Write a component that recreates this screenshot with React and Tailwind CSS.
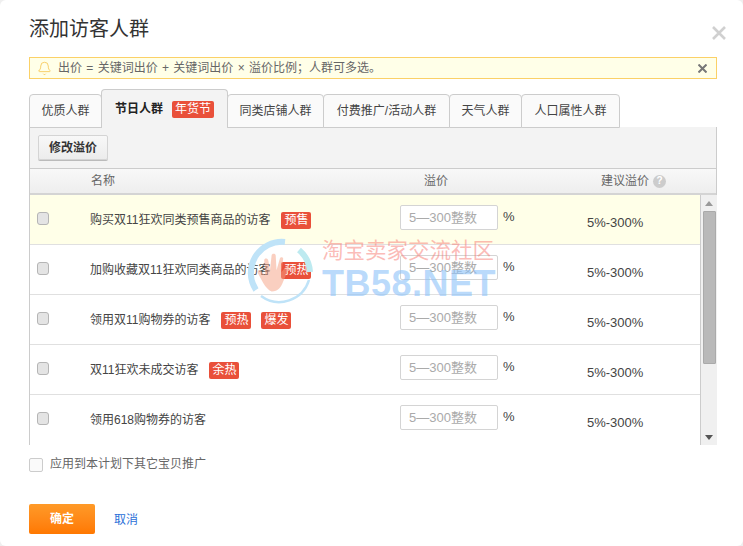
import { Bell } from "lucide-react";

const font = "font-['Liberation_Sans','Noto_Sans_CJK_SC',sans-serif]";

const tabs = [
  { label: "优质人群", width: "w-[73px]" },
  { label: "节日人群", width: "w-[127px]", active: true, badge: "年货节" },
  { label: "同类店铺人群", width: "w-[97px]" },
  { label: "付费推广/活动人群", width: "w-[127px]" },
  { label: "天气人群", width: "w-[73px]" },
  { label: "人口属性人群", width: "w-[99px]" },
];

const rows = [
  { name: "购买双11狂欢同类预售商品的访客", tags: ["预售"], highlight: true },
  { name: "加购收藏双11狂欢同类商品的访客", tags: ["预热"] },
  { name: "领用双11购物券的访客", tags: ["预热", "爆发"] },
  { name: "双11狂欢未成交访客", tags: ["余热"] },
  { name: "领用618购物券的访客", tags: [] },
];

const Tag = ({ children }) => (
  <span className="ml-[10px] inline-flex h-[17px] w-[30px] items-center justify-center rounded-[2px] bg-[#e9503a] text-[12px] leading-none text-white first-of-type:ml-[11px]">
    {children}
  </span>
);

const Tab = ({ tab }) => {
  if (tab.active) {
    return (
      <div className={`${tab.width} -ml-px flex h-[39px] items-center rounded-t-[4px] border border-b-0 border-[#ccc] bg-[#f3f3f3] pl-[13px] text-[12px] font-bold text-[#222]`}>
        {tab.label}
        <span className="ml-[9px] inline-flex h-[17px] w-[42px] items-center justify-center rounded-[2px] bg-[#e9503a] font-normal leading-none text-white">
          {tab.badge}
        </span>
      </div>
    );
  }
  return (
    <div className={`${tab.width} -ml-px flex h-[34px] items-center justify-center rounded-t-[4px] border border-[#ccc] bg-[#fafafa] text-[12px] text-[#444] first:ml-0`}>
      {tab.label}
    </div>
  );
};

const Row = ({ row }) => (
  <div className={`flex h-[50px] shrink-0 border-b border-[#e0e0e0] last:border-b-0 ${row.highlight ? "bg-[#ffffe8]" : "bg-white"}`}>
    <div className="w-[60px] shrink-0 pl-[7px] pt-[17px]">
      <div className="h-[13px] w-[12px] rounded-[3px] border border-[#b5b5b5] bg-[#e4e4e4]" />
    </div>
    <div className="flex h-[48px] w-[310px] shrink-0 items-center pt-[2px] text-[12px] text-[#444]">
      {row.name}
      {row.tags.map((tag) => (
        <Tag key={tag}>{tag}</Tag>
      ))}
    </div>
    <div className="w-[187px] shrink-0 pt-[10px]">
      <div className="flex items-start">
        <div className="flex h-[25px] w-[98px] items-center rounded-[2px] border border-[#d4d4d4] bg-white pl-[8px] text-[13px] text-[#aaa]">
          5—300整数
        </div>
        <span className="ml-[5px] mt-[2px] text-[13px] text-[#444]">%</span>
      </div>
    </div>
    <div className="pt-[20px] text-[13px] leading-[16px] text-[#444]">5%-300%</div>
  </div>
);

const Watermark = () => (
  <div className="pointer-events-none absolute left-[247px] top-[238px] flex h-[70px] w-[255px]">
    <svg width="68" height="70" viewBox="0 0 68 70" className="shrink-0">
      <path d="M38 4 A31 31 0 0 0 9 52" fill="none" stroke="#bfe3f8" strokeWidth="6" />
      <path d="M14 58 A31 31 0 0 0 62 42" fill="none" stroke="#bfe3f8" strokeWidth="2.5" />
      <path d="M52 12 A31 31 0 0 1 63 34" fill="none" stroke="#bdeaf0" strokeWidth="6" />
      <path
        transform="translate(0 6) scale(0.82)"
        d="M30 58 C22 54 18 44 13 35 C12 32 15 31 17 33 L22 38 L21 20 C21 17 25 17 26 20 L28 32 L30 14 C30 11 35 11 35 14 L36 32 L40 18 C41 15 45 16 44 19 L42 34 L48 27 C50 25 53 27 51 30 L44 46 C42 52 38 58 30 58 Z"
        fill="#f59f82"
        fillOpacity="0.5"
      />
    </svg>
    <div className="ml-[7px] flex flex-col">
      <span className="mt-[1px] whitespace-nowrap text-[21.5px] leading-[24px] text-[#f77a72]/50">淘宝卖家交流社区</span>
      <span className="whitespace-nowrap text-[36px] font-bold leading-[42px] tracking-[0.5px] text-[#8cc2f9]/60">TB58.NET</span>
    </div>
  </div>
);

export default function App() {
  return (
    <div className="h-[546px] w-[743px] bg-[#efefef]">
      <div className={`${font} relative h-[546px] w-[743px] overflow-hidden rounded-[6px] bg-white px-[29px]`}>
        <div className="flex h-[57px] items-start justify-between">
          <h2 className="mt-[15px] text-[20px] font-normal leading-[28px] text-[#333]">添加访客人群</h2>
          <svg width="14" height="14" viewBox="0 0 14 14" className="mr-[-12px] mt-[26px]">
            <path d="M1 1 L13 13 M13 1 L1 13" stroke="#d0d0d0" strokeWidth="2.6" />
          </svg>
        </div>

        <div className="flex h-[22px] w-[688px] items-center border border-[#fbd167] bg-[#ffffe8] pl-[7px] pr-[9px] text-[12px] text-[#666]">
          <Bell size={15} strokeWidth={1.3} className="text-[#f6c550]" />
          <span className="ml-[6px] flex-1 [word-spacing:1px]">出价 = 关键词出价 + 关键词出价 × 溢价比例；人群可多选。</span>
          <svg width="9" height="9" viewBox="0 0 9 9">
            <path d="M0.5 0.5 L8.5 8.5 M8.5 0.5 L0.5 8.5" stroke="#777" strokeWidth="2" />
          </svg>
        </div>

        <div className="mt-[10px] flex h-[39px] items-end pl-0">
          {tabs.map((tab) => (
            <Tab key={tab.label} tab={tab} />
          ))}
        </div>

        <div className="w-[688px] border-r border-l border-[#ccc] -mt-px">
          <div className="flex h-[42px] items-start border-b border-[#ccc] bg-[#f3f3f3] pl-[8px] pt-[8px]">
            <div className="flex h-[25px] w-[70px] items-center justify-center rounded-[2px] border border-[#d4d4d4] bg-gradient-to-b from-[#f8f8f8] to-[#ececec] text-[12px] font-bold text-[#333] shadow-[0_1px_0_#bbb]">
              修改溢价
            </div>
          </div>
          <div className="flex h-[26px] items-center border-b-2 border-[#d4d4d4] bg-gradient-to-b from-[#f8f8f8] to-[#eeeeee] text-[12px] text-[#666]">
            <span className="ml-[61px] w-[333px]">名称</span>
            <span className="w-[177px]">溢价</span>
            <span>建议溢价</span>
            <span className="ml-[4px] flex h-[13px] w-[13px] items-center justify-center rounded-full bg-[#ccc] text-[10px] font-bold leading-none text-white">?</span>
          </div>
        </div>

        <div className="flex h-[250px] w-[688px] border-l border-[#ccc]">
          <div className="flex h-[250px] flex-1 flex-col overflow-hidden border-r border-[#ccc]">
            {rows.map((row) => (
              <Row key={row.name} row={row} />
            ))}
          </div>
          <div className="flex w-[16px] shrink-0 flex-col items-center bg-[#f0f0f0] pt-[6px]">
            <div className="h-0 w-0 border-x-[4px] border-b-[5px] border-x-transparent border-b-[#999]" />
            <div className="mt-[5px] h-[153px] w-[13px] rounded-[1px] border border-[#aaa] bg-[#b9b9b9]" />
            <div className="mt-auto mb-[5px] h-0 w-0 border-x-[4px] border-t-[5px] border-x-transparent border-t-[#555]" />
          </div>
        </div>

        <div className="mt-[13px] flex h-[14px] items-center text-[12px] text-[#666]">
          <div className="h-[14px] w-[14px] rounded-[2px] border border-[#ccc] bg-[#fafafa]" />
          <span className="ml-[7px] -mt-[2px]">应用到本计划下其它宝贝推广</span>
        </div>

        <div className="mt-[32px] flex items-center">
          <div className="flex h-[30px] w-[66px] items-center justify-center rounded-[2px] bg-gradient-to-b from-[#ff9a27] to-[#ff7800] text-[12px] font-bold text-white">
            确定
          </div>
          <span className="ml-[19px] mt-[1px] text-[12px] text-[#2a70d8]">取消</span>
        </div>

        <Watermark />
      </div>
    </div>
  );
}
